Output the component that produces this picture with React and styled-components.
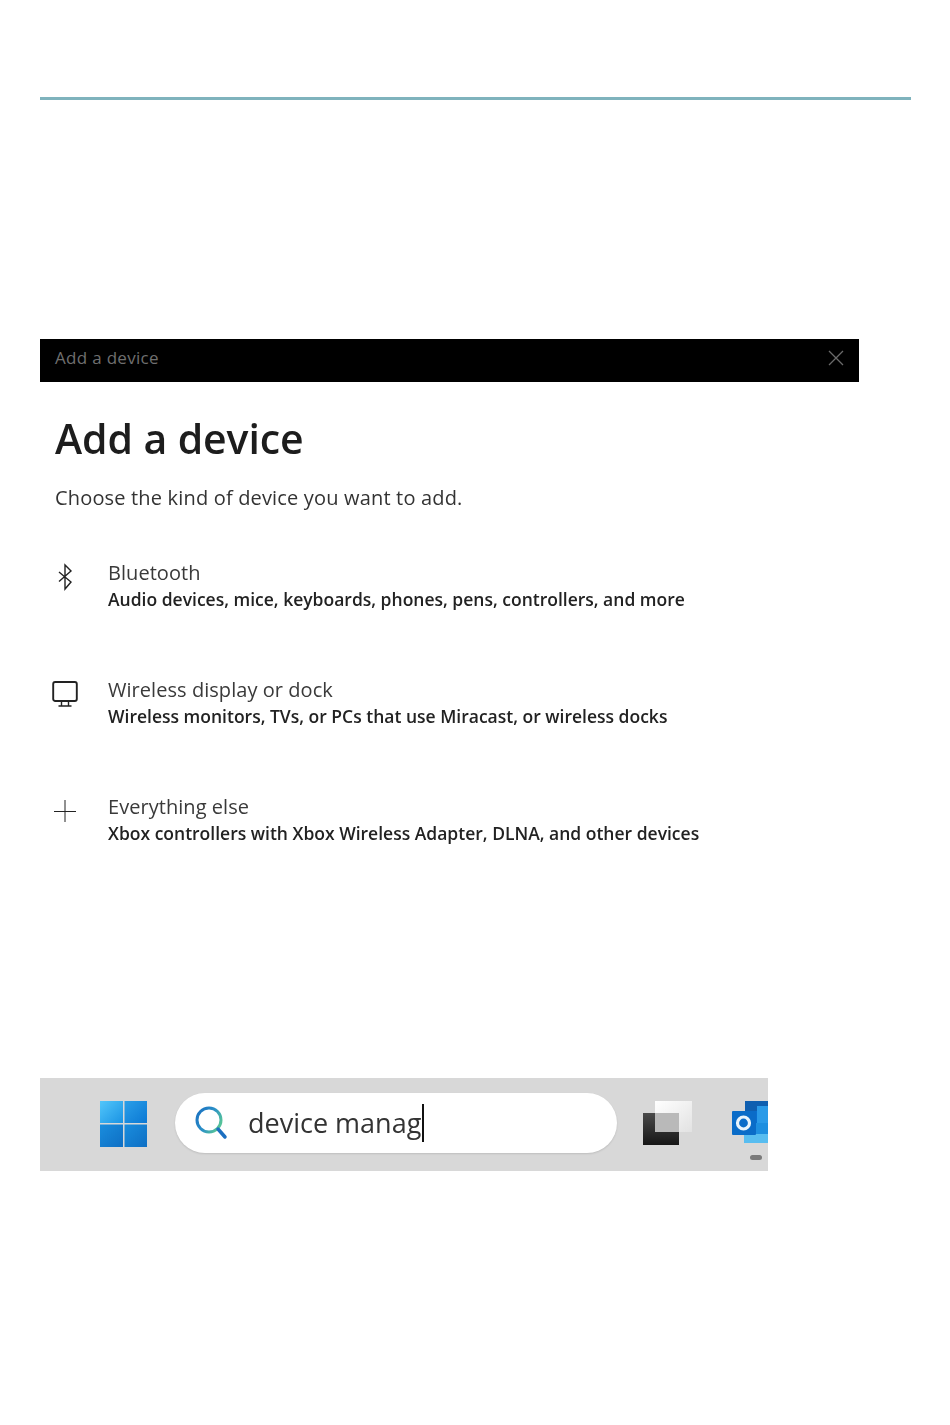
import React from "react";
import styled, { createGlobalStyle } from "styled-components";

const Global = createGlobalStyle`
  html, body { margin: 0; padding: 0; background: #fff; }
  body { font-family: "Open Sans", "Noto Sans", "Liberation Sans", sans-serif; }
`;

const Page = styled.div`
  width: 950px;
  height: 1425px;
  box-sizing: border-box;
  padding: 97px 39px 0 40px;
  overflow: hidden;
`;

const Rule = styled.hr`
  margin: 0 0 239px;
  height: 3px;
  border: 0;
  background: #7fb3bd;
`;

const Dialog = styled.section`
  width: 819px;
  filter: blur(0.35px);
`;

const TitleBar = styled.header`
  height: 43px;
  box-sizing: border-box;
  padding: 0 14px 7px 15px;
  background: #000;
  display: flex;
  align-items: center;
  justify-content: space-between;
`;

const TitleText = styled.span`
  font-size: 17px;
  color: #6f6f6f;
  letter-spacing: 0.3px;
`;

const CloseIcon = styled.svg`
  width: 18px;
  height: 18px;
  display: block;
  margin-top: 2px;
`;

const Body = styled.div`
  padding: 29px 15px 0;
`;

const Heading = styled.h1`
  margin: 0;
  font-size: 41px;
  line-height: 54px;
  font-weight: 600;
  color: #1d1d1d;
  letter-spacing: -0.1px;
`;

const Lead = styled.p`
  margin: 19px 0 46px;
  font-size: 20px;
  line-height: 28px;
  color: #333;
  letter-spacing: 0.17px;
`;

const OptionList = styled.div`
  display: flex;
  flex-direction: column;
  gap: 63px;
`;

const Option = styled.div`
  display: flex;
  height: 54px;
`;

const IconSlot = styled.div`
  width: 53px;
  flex: none;
  padding-top: 5px;
  margin-left: -3px;
  margin-right: 3px;
  box-sizing: border-box;
`;

const OptionIcon = styled.svg`
  display: block;
  width: 26px;
  height: 28px;
  fill: none;
  stroke: #222;
  stroke-width: 1.4;
`;

const OptionText = styled.div`
  display: flex;
  flex-direction: column;
`;

const OptionTitle = styled.div`
  padding-top: 1px;
  font-size: 20px;
  line-height: 28px;
  color: #3a3a3a;
  letter-spacing: 0.05px;
`;

const OptionDesc = styled.div`
  margin-top: -1px;
  font-size: 17.5px;
  line-height: 26px;
  font-weight: 600;
  color: #222;
  white-space: nowrap;
`;

const Taskbar = styled.div`
  margin-top: 232px;
  width: 728px;
  height: 93px;
  background: #d8d8d8;
  display: flex;
  align-items: center;
  padding: 0 0 2px 60px;
  box-sizing: border-box;
  overflow: hidden;
  filter: blur(0.6px);
`;

const StartLogo = styled.svg`
  width: 47px;
  height: 46px;
  flex: none;
  display: block;
`;

const SearchBox = styled.div`
  width: 442px;
  height: 60px;
  margin: 0 0 2px 28px;
  flex: none;
  background: #fff;
  border-radius: 30px;
  display: flex;
  align-items: center;
  padding-left: 19px;
  box-sizing: border-box;
  box-shadow: 0 1px 2px rgba(0, 0, 0, 0.12);
`;

const SearchIcon = styled.svg`
  width: 34px;
  height: 36px;
  flex: none;
  display: block;
`;

const SearchText = styled.span`
  margin-left: 20px;
  font-size: 27px;
  line-height: 36px;
  color: #333;
`;

const Caret = styled.span`
  width: 2px;
  height: 38px;
  margin-left: 1px;
  background: #111;
`;

const TaskViewIcon = styled.svg`
  width: 50px;
  height: 46px;
  flex: none;
  margin-left: 26px;
  display: block;
`;

const OutlookSlot = styled.div`
  flex: none;
  align-self: flex-start;
  margin-left: 39px;
  padding-top: 23px;
  display: flex;
  flex-direction: column;
  align-items: flex-start;
`;

const OutlookIcon = styled.svg`
  width: 37px;
  height: 44px;
  display: block;
`;

const RunningDot = styled.span`
  width: 12px;
  height: 5px;
  margin: 10px 0 0 18px;
  border-radius: 3px;
  background: #7a7a7a;
`;

const options = [
  {
    title: "Bluetooth",
    desc: "Audio devices, mice, keyboards, phones, pens, controllers, and more",
    icon: <path d="M7 9 L19 19 L13 26 V2 L19 8 L7 18.5" />,
  },
  {
    title: "Wireless display or dock",
    desc: "Wireless monitors, TVs, or PCs that use Miracast, or wireless docks",
    icon: (
      <>
        <rect x="1.2" y="2" width="23.6" height="19" rx="2" strokeWidth="1.9" />
        <path d="M9.5 21 V25.5 M16.5 21 V25.5 M6.5 26 H19.5" />
      </>
    ),
  },
  {
    title: "Everything else",
    desc: "Xbox controllers with Xbox Wireless Adapter, DLNA, and other devices",
    icon: <path d="M13 3 V25 M2 14.5 H24" strokeWidth="1" />,
  },
];

export default function App() {
  return (
    <Page>
      <Global />
      <Rule />
      <Dialog>
        <TitleBar>
          <TitleText>Add a device</TitleText>
          <CloseIcon viewBox="0 0 18 18">
            <path d="M2 2 L16 16 M16 2 L2 16" stroke="#6a6a6a" strokeWidth="1.3" fill="none" />
          </CloseIcon>
        </TitleBar>
        <Body>
          <Heading>Add a device</Heading>
          <Lead>Choose the kind of device you want to add.</Lead>
          <OptionList>
            {options.map((o) => (
              <Option key={o.title}>
                <IconSlot>
                  <OptionIcon viewBox="0 0 26 28">{o.icon}</OptionIcon>
                </IconSlot>
                <OptionText>
                  <OptionTitle>{o.title}</OptionTitle>
                  <OptionDesc>{o.desc}</OptionDesc>
                </OptionText>
              </Option>
            ))}
          </OptionList>
        </Body>
      </Dialog>
      <Taskbar>
        <StartLogo viewBox="0 0 47 46">
          <defs>
            <linearGradient id="win1" x1="0" y1="0" x2="1" y2="1">
              <stop offset="0" stopColor="#52c6fa" />
              <stop offset="1" stopColor="#1a93e4" />
            </linearGradient>
            <linearGradient id="win2" x1="0" y1="0" x2="1" y2="1">
              <stop offset="0" stopColor="#2a9fe8" />
              <stop offset="1" stopColor="#0b78d4" />
            </linearGradient>
            <linearGradient id="win3" x1="0" y1="0" x2="1" y2="1">
              <stop offset="0" stopColor="#1a8ddd" />
              <stop offset="1" stopColor="#0e6fc4" />
            </linearGradient>
          </defs>
          <rect x="0" y="0" width="23" height="22" fill="url(#win1)" />
          <rect x="24.5" y="0" width="22.5" height="22" fill="url(#win2)" />
          <rect x="0" y="23.5" width="23" height="22.5" fill="url(#win3)" />
          <rect x="24.5" y="23.5" width="22.5" height="22.5" fill="url(#win3)" />
        </StartLogo>
        <SearchBox>
          <SearchIcon viewBox="0 0 34 36">
            <defs>
              <linearGradient id="lens" x1="0" y1="0" x2="1" y2="0.6">
                <stop offset="0" stopColor="#1a6fc0" />
                <stop offset="0.55" stopColor="#2a8fc8" />
                <stop offset="1" stopColor="#55c29a" />
              </linearGradient>
            </defs>
            <circle cx="15" cy="15" r="12" fill="none" stroke="url(#lens)" strokeWidth="3" />
            <path d="M24 24 L31 32" stroke="#1c6fc0" strokeWidth="3.5" strokeLinecap="round" />
          </SearchIcon>
          <SearchText>device manag</SearchText>
          <Caret />
        </SearchBox>
        <TaskViewIcon viewBox="0 0 50 46">
          <defs>
            <linearGradient id="tvDark" x1="0" y1="0" x2="0" y2="1">
              <stop offset="0" stopColor="#4a4a4a" />
              <stop offset="1" stopColor="#161616" />
            </linearGradient>
            <linearGradient id="tvLight" x1="0" y1="0" x2="1" y2="1">
              <stop offset="0" stopColor="#ffffff" />
              <stop offset="1" stopColor="#e2e2e2" />
            </linearGradient>
          </defs>
          <rect x="0" y="12" width="36" height="32" fill="url(#tvDark)" />
          <rect x="12" y="0" width="37" height="31" fill="url(#tvLight)" />
          <rect x="12" y="12" width="24" height="19" fill="#b9b9b9" />
        </TaskViewIcon>
        <OutlookSlot>
          <OutlookIcon viewBox="0 0 37 44">
            <rect x="13" y="0" width="24" height="10" fill="#0f5fb0" />
            <rect x="13" y="10" width="12" height="12" fill="#0a6fcf" />
            <rect x="25" y="5" width="12" height="17" fill="#2a9ae8" />
            <rect x="12" y="22" width="25" height="15" fill="#1e8fe0" />
            <rect x="12" y="33" width="25" height="9" fill="#58bdf0" />
            <rect x="0" y="10" width="24" height="24" rx="1" fill="#0a6cc8" />
            <circle cx="11.5" cy="22" r="6" fill="none" stroke="#e8f4fc" strokeWidth="3.2" />
          </OutlookIcon>
          <RunningDot />
        </OutlookSlot>
      </Taskbar>
    </Page>
  );
}
